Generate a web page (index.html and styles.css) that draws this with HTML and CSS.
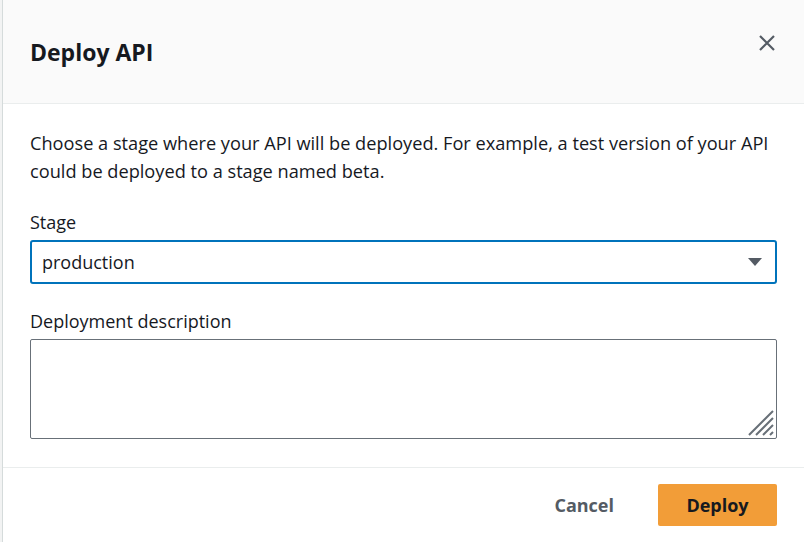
FILE: index.html
```html
<!DOCTYPE html>
<html>
<head>
<meta charset="utf-8">
<link rel="stylesheet" href="styles.css">
</head>
<body>
<div class="page">
  <div class="backdrop"></div>
  <div class="dialog">
    <header class="dialog-header">
      <h1 class="title">Deploy API</h1>
      <button class="close" aria-label="Close">
        <svg width="20" height="20" viewBox="0 0 20 20"><path d="M3 3 L17 17 M17 3 L3 17" stroke="#545b64" stroke-width="2.2" fill="none"/></svg>
      </button>
    </header>
    <section class="dialog-body">
      <p class="intro">Choose a stage where your API will be deployed. For example, a test version of your API could be deployed to a stage named beta.</p>
      <div class="field">
        <label class="label">Stage</label>
        <div class="select">
          <span class="select-value">production</span>
          <svg class="caret" width="16" height="10" viewBox="0 0 16 10"><path d="M1 1 H15 L8 9 Z" fill="#545b64"/></svg>
        </div>
      </div>
      <div class="field">
        <label class="label">Deployment description</label>
        <div class="textarea">
          <svg class="grip" width="28" height="28" viewBox="0 0 28 28"><path d="M2 26 L26 2 M9 26 L26 9 M16 26 L26 16 M23 26 L26 23" stroke="#687078" stroke-width="2" fill="none"/></svg>
        </div>
      </div>
    </section>
    <footer class="dialog-footer">
      <button class="btn-link">Cancel</button>
      <button class="btn-primary">Deploy</button>
    </footer>
  </div>
</div>
</body>
</html>
```
FILE: styles.css
```css
* { box-sizing: border-box; }
html, body { margin: 0; padding: 0; }
body {
  font-family: "Open Sans", "Noto Sans", sans-serif;
  color: #16191f;
  background: #f2f3f3;
  width: 804px;
  height: 542px;
  overflow: hidden;
}
.page { display: flex; height: 542px; }
.backdrop { width: 3px; background: #f2f3f3; border-right: 1px solid #d5dbdb; }
.dialog { flex: 1; display: flex; flex-direction: column; background: #fff; }
.dialog-header {
  height: 104px;
  flex: none;
  background: #fafafa;
  border-bottom: 1px solid #eaeded;
  display: flex;
  align-items: center;
  justify-content: space-between;
  padding: 0 27px 0 27px;
}
.title { margin: 0; font-size: 23px; font-weight: 700; }
.close { background: none; border: 0; padding: 0; display: flex; margin-top: -18px; }
.dialog-body { flex: none; padding: 25px 27px 0 27px; height: 364px; border-bottom: 1px solid #eaeded; }
.intro { margin: 0; font-size: 18.2px; line-height: 28px; }
.field { margin-top: 25px; }
.label { display: block; font-size: 18px; line-height: 24px; margin-bottom: 6px; }
.select {
  height: 44px;
  border: 2px solid #0073bb;
  border-radius: 3px;
  display: flex;
  align-items: center;
  justify-content: space-between;
  padding: 0 12px 0 10px;
  font-size: 18px;
}
.textarea {
  height: 100px;
  border: 1px solid #687078;
  border-radius: 2px;
  position: relative;
}
.grip { position: absolute; right: 1px; bottom: 1px; }
.dialog-footer {
  flex: 1;
  display: flex;
  align-items: center;
  justify-content: flex-end;
  padding: 0 27px 0 0;
  gap: 44px;
}
.btn-link {
  background: none; border: 0; padding: 0;
  font-family: inherit; font-size: 18px; font-weight: 700; color: #545b64;
}
.btn-primary {
  font-family: inherit; font-size: 18px; font-weight: 700; color: #16191f;
  background: #f29d38; border: 0; border-radius: 2px;
  width: 119px; height: 42px;
}
```
